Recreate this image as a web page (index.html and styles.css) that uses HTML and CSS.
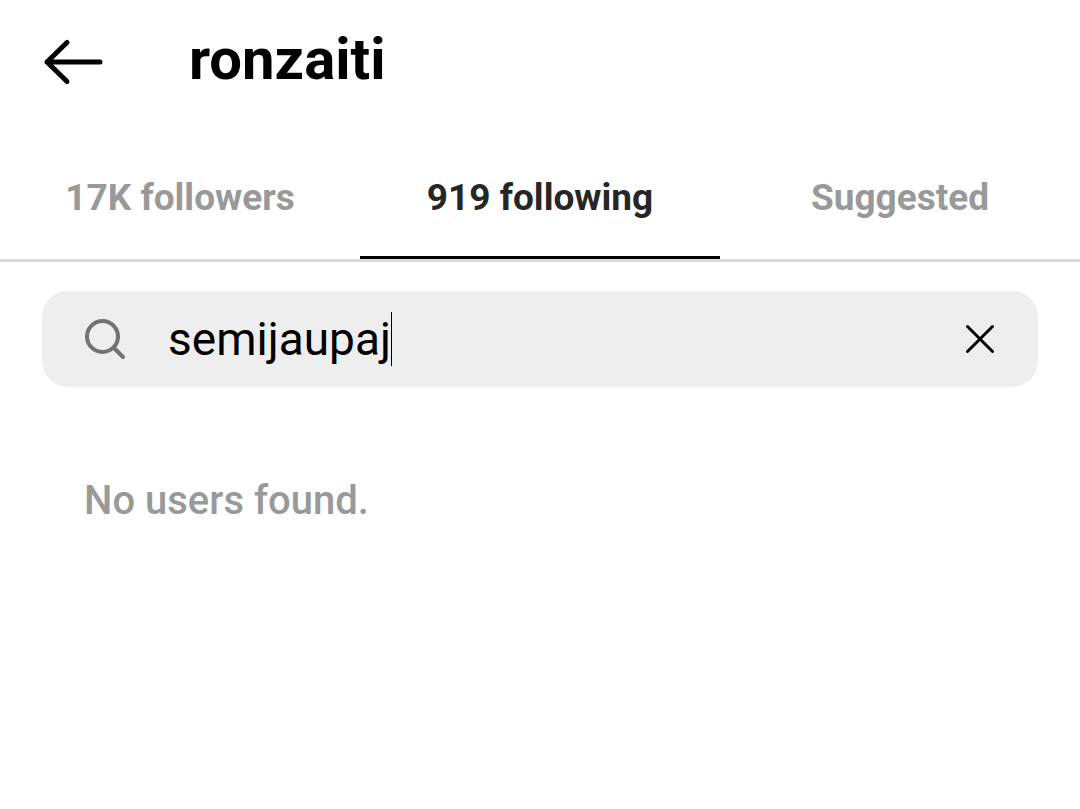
FILE: index.html
```html
<!DOCTYPE html>
<html lang="en">
<head>
    <meta charset="UTF-8">
    <meta name="viewport" content="width=device-width, initial-scale=1.0">
    <title>ronzaiti</title>
    <link rel="stylesheet" href="styles.css">
</head>
<body>
    <header class="header">
        <button class="icon-button" type="button" aria-label="Back">
            <svg class="back-icon" viewBox="0 0 60 48">
                <path d="M24 4.5 L4 24 L24 43.5 M4 24 H57"/>
            </svg>
        </button>
        <h1>ronzaiti</h1>
    </header>

    <nav class="tabs">
        <a href="#followers" class="tab">17K followers</a>
        <a href="#following" class="tab active" aria-current="page">919 following</a>
        <a href="#suggested" class="tab">Suggested</a>
    </nav>

    <main id="following">
        <form class="search">
            <label class="search-label" for="search">
                <svg class="search-icon" viewBox="0 0 42 42" role="img" aria-label="Search">
                    <circle cx="18.5" cy="18.5" r="15.5"/>
                    <path d="M29.5 29.5 L39 39"/>
                </svg>
            </label>
            <div class="search-text">
                <input id="search" type="text" value="semijaupaj" autocomplete="off" spellcheck="false">
                <span class="caret"></span>
            </div>
            <button class="icon-button" type="reset" aria-label="Clear">
                <svg class="clear-icon" viewBox="0 0 32 32">
                    <path d="M3.5 3.5 L28.5 28.5 M28.5 3.5 L3.5 28.5"/>
                </svg>
            </button>
        </form>

        <p class="empty">No users found.</p>
    </main>
</body>
</html>
```

FILE: styles.css
```css
body {
    font-family: Roboto, "Liberation Sans", sans-serif;
    background-color: #fff;
    color: #000;
    margin: 0;
}
.icon-button {
    display: flex;
    padding: 0;
    border: none;
    background: none;
    cursor: pointer;
}
svg {
    display: block;
    fill: none;
    stroke: #000;
    stroke-linecap: round;
    stroke-linejoin: round;
}
.header {
    display: flex;
    align-items: center;
    gap: 86px;
    padding: 24px 43px 19px;
}
.back-icon {
    width: 60px;
    height: 48px;
    stroke-width: 5px;
}
h1 {
    margin: 0;
    padding-bottom: 5px;
    font-size: 58px;
    font-weight: 700;
    line-height: 70px;
}
.tabs {
    display: grid;
    grid-template-columns: repeat(3, 1fr);
    margin-top: 20px;
    border-bottom: 3px solid #dbdbdb;
}
.tab {
    padding: 36px 0 35px;
    border-bottom: 3px solid transparent;
    color: #999;
    font-size: 37px;
    font-weight: 700;
    line-height: 47px;
    text-align: center;
    text-decoration: none;
}
.tab.active {
    color: #262626;
    border-color: #000;
}
main {
    padding: 29px 42px;
}
.search {
    display: flex;
    align-items: center;
    height: 96px;
    padding: 0 42px;
    border-radius: 26px;
    background-color: #eee;
}
.search-icon {
    width: 42px;
    height: 42px;
    stroke: #737373;
    stroke-width: 4px;
}
.search-text {
    display: flex;
    flex: 1;
    align-items: center;
    margin-left: 42px;
}
/* the input grows with its text so the caret sits right after it */
.search-text input {
    field-sizing: content;
    padding: 0;
    border: none;
    outline: none;
    background: none;
    color: #000;
    caret-color: transparent;
    font-family: inherit;
    font-size: 46px;
    line-height: 54px;
}
.caret {
    width: 1px;
    height: 54px;
    background-color: #000;
}
.clear-icon {
    width: 32px;
    height: 32px;
    stroke-width: 3px;
}
.empty {
    margin: 90px 42px 0;
    color: #999;
    font-size: 40px;
    font-weight: 500;
    line-height: 48px;
}
```
